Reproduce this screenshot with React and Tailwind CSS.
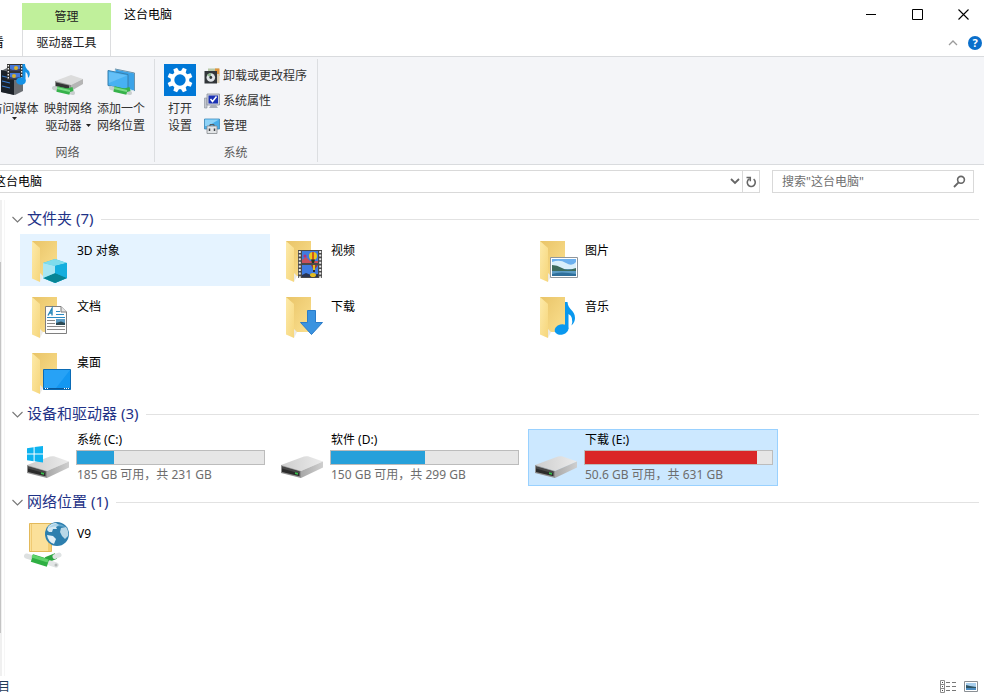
import React from 'react';

const FolderBase = () => (
  <>
    <defs>
      <linearGradient id="folderBack" x1="0" y1="0" x2="1" y2="1">
        <stop offset="0" stopColor="#e9c468" />
        <stop offset="1" stopColor="#fbe08f" />
      </linearGradient>
      <linearGradient id="folderFront" x1="0" y1="0" x2="1" y2="1">
        <stop offset="0" stopColor="#fdeaa9" />
        <stop offset="1" stopColor="#f6d67c" />
      </linearGradient>
    </defs>
    <path d="M8 4H33V39H8Z" fill="url(#folderBack)" />
    <path d="M8 4L16 11V45L8 41.5Z" fill="url(#folderFront)" />
    <path d="M16 36L19 39L16 45Z" fill="#eceae4" />
  </>
);

const Icon3D = () => (
  <>
    <path d="M19 26L31 22L43 26V41L31 46L19 41Z" fill="#35c3dc" />
    <path d="M19 26L31 22L43 26L31 29Z" fill="#7fdcec" />
    <path d="M19 26L31 29V46L19 41Z" fill="#62d2e6" />
    <path d="M31 29L43 26V41L31 46Z" fill="#11a6d8" />
    <path d="M19 41L31 36L43 41L31 46Z" fill="#078495" />
    <path d="M31 29V36L43 41V26Z" fill="#14aede" />
    <path d="M19 26L31 29V36L19 41Z" fill="#a9e6f2" />
  </>
);

const IconVideo = () => (
  <>
    <path d="M20 13H44V41H20Z" fill="#4a4a4a" />
    <path d="M24 14H40V26H24ZM24 28H40V40H24Z" fill="#3f7be0" />
    <path d="M21.8 14V41M42.2 14V41" stroke="#e8e8e8" strokeWidth="2" strokeDasharray="2 1.6" />
    <path d="M24 23L28 20L32 24L40 24V26H24Z" fill="#c9505c" />
    <path d="M24 38L28 36L33 38L40 37V40H24Z" fill="#2a3552" />
    <ellipse cx="35" cy="19" rx="4" ry="4" fill="#e9c71c" />
    <path d="M34.300 15H35.700V23H34.300Z" fill="#c92a1c" />
    <path d="M33 22.500H37L36 26H34Z" fill="#25371c" />
    <path d="M33 28H40L37 32H35Z" fill="#9b3a3c" />
    <path d="M35 28H37V33H35Z" fill="#e2c31f" />
    <path d="M35 33H37V35H35Z" fill="#2b2b2b" />
    <circle cx="27" cy="19" r="1.600" fill="#b7307b" />
    <ellipse cx="35" cy="38" rx="3" ry="2" fill="#e3bc20" />
  </>
);

const IconPicture = () => (
  <>
    <path d="M18.5 20.5H45.5V40.5H18.5Z" fill="#fff" stroke="#8f969c" />
    <path d="M20 22H44V39H20Z" fill="#6cb0ee" />
    <path d="M20 25Q28 22 34 26T44 25V32H20Z" fill="#d9effb" />
    <path d="M20 28Q25 28 30 31T44 31V34H20Z" fill="#3d6b5c" />
    <path d="M20 34H44V39H20Z" fill="#5c9cc4" />
    <path d="M20 37Q28 34 44 37V39H20Z" fill="#2f6f9b" />
  </>
);

const IconDocument = () => (
  <>
    <path d="M21.5 13.5H37L42.5 19V40.5H21.5Z" fill="#fdfdfd" stroke="#7f7f7f" />
    <path d="M37 13.5V19H42.5" fill="#e5e5e5" stroke="#7f7f7f" />
    <path d="M24 22.5L28 15.5V22.5M25.5 20H28" stroke="#2585b8" strokeWidth="1.4" fill="none" />
    <path d="M32 18.5H36M32 21.5H40M23 24.5H41" stroke="#2b8bc4" />
    <path d="M23 27.5H31M23 30.5H31M23 33.5H41M23 36.5H41" stroke="#8a8a8a" />
    <path d="M32 26H41V32H32Z" fill="#5c9cc4" />
    <path d="M32 30L37 28.5L41 30V32H32Z" fill="#2d4a55" />
  </>
);

const IconDownload = () => (
  <path d="M29.5 17.5H37.5V29.5H44.5L33.5 41.5L22.5 29.5H29.5Z" fill="#3a93e0" stroke="#2b7cc9" />
);

const IconMusic = () => (
  <>
    <ellipse cx="29.5" cy="36.5" rx="7" ry="5.2" fill="#0a98ee" transform="rotate(-14 29.5 36.5)" />
    <path d="M33 9H35.5C36 17 43 17 43 25Q43 29 39.5 32.5Q42 24 36.5 21V36H33Z" fill="#0a98ee" />
  </>
);

const IconDesktop = () => (
  <>
    <path d="M19.5 20.5H46.5V40.5H19.5Z" fill="#1397f2" stroke="#0b6bb5" />
    <path d="M20 21H46L32 39H20Z" fill="#35aaf8" opacity="0.6" />
    <path d="M20 39.5H46" stroke="#0a5a9c" />
    <path d="M21 39.5H24M40 39.5H45" stroke="#fff" strokeDasharray="1 1" />
  </>
);

const FolderIcon = ({ children }) => (
  <svg className="size-12 shrink-0" viewBox="0 0 48 48" aria-hidden="true">
    <FolderBase />
    {children}
  </svg>
);

const DriveIcon = ({ windows }) => (
  <svg className="size-12 shrink-0" viewBox="0 0 48 48" aria-hidden="true">
    <defs>
      <linearGradient id="driveTop" x1="0" y1="0" x2="1" y2="0">
        <stop offset="0" stopColor="#cdcdcd" />
        <stop offset="1" stopColor="#ebebeb" />
      </linearGradient>
      <linearGradient id="driveSide" x1="0" y1="0" x2="1" y2="0">
        <stop offset="0" stopColor="#a8a8a8" />
        <stop offset="1" stopColor="#cfcfcf" />
      </linearGradient>
    </defs>
    <path d="M3 32L26 23.5Q28 23 30 23.3L45 28.5L23 38Z" fill="url(#driveTop)" />
    <path d="M23 38L45 28.5V34.5L23 45Z" fill="url(#driveSide)" />
    <path d="M3 32L23 38V45L3 40Z" fill="#8f8f8f" />
    <path d="M4 33.5L21.5 38.5V43.3L4 39Z" fill="#2b2b2b" />
    <path d="M4 33.5L21.5 38.5V40.5L4 35.5Z" fill="#474747" />
    <path d="M17 39.2L20 40V41.8L17 41Z" fill="#35c24b" />
    {windows && (
      <path d="M3 15.2L9.6 14.2V20.6H3ZM10.6 14L19 13V20.6H10.6ZM3 21.6H9.6V28.2L3 27.2ZM10.6 21.6H19V29.4L10.6 28.3Z" fill="#0db3f0" />
    )}
  </svg>
);

const NetworkLocationIcon = () => (
  <svg className="size-12 shrink-0" viewBox="0 0 48 48" aria-hidden="true">
    <path d="M5.5 3.5H27.500V31.5H5.5Z" fill="#fbe09a" stroke="#e3b95a" />
    <path d="M7.5 4V31" stroke="#f0ca73" />
    <path d="M24 14L27 12V31H24Z" fill="#f2cd74" />
    <circle cx="33" cy="14" r="12" fill="#2d7fae" />
    <path d="M24 7Q27 3 32 3L35 5L32 7L33 9L29 9L28 12L25 12L23 10Z" fill="#d5e9f3" />
    <path d="M23 15L29 16L32 19L30 24Q24 22 23 15Z" fill="#e1eff6" />
    <path d="M37 8L42 7Q45 11 44 16L41 19L38 16L36 12Z" fill="#b9d8e8" />
    <path d="M24 8Q32 0 42 7Q32 5 24 8Z" fill="#8cc4e3" opacity="0.6" />
    <path d="M22 40L32 36" stroke="#2ba53f" strokeWidth="6" />
    <path d="M31 36.5L35 35" stroke="#dfe3e3" strokeWidth="5" strokeLinecap="round" />
    <path d="M2.5 36L9 38" stroke="#dde0e0" strokeWidth="5" strokeLinecap="round" />
    <path d="M26 43L32 45" stroke="#e2e5e5" strokeWidth="5.5" strokeLinecap="round" />
    <path d="M8 38L24 43" stroke="#2faf43" strokeWidth="8" strokeLinejoin="round" />
    <path d="M8 36L24 41" stroke="#5fd46c" strokeWidth="3" />
    <circle cx="32" cy="45" r="1.5" fill="#b4b8b8" />
  </svg>
);

const MediaIcon = () => (
  <svg className="size-8" viewBox="0 0 32 32" aria-hidden="true">
    <path d="M0 7L6 4H22V27L14 31L0 28Z" fill="#6b6f74" />
    <path d="M0 6L13 9V31L0 28Z" fill="#1c2229" />
    <path d="M1 12L9 14M1 17L9 19M1 22L9 24" stroke="#3a7dd0" strokeWidth="1.2" />
    <path d="M6 0H22V16H6Z" fill="#333" />
    <path d="M9 1H19V7H9ZM9 9H19V15H9Z" fill="#4677d6" />
    <path d="M7.3 1V16M20.7 1V16" stroke="#f1f1f1" strokeWidth="1.4" strokeDasharray="1.5 1.5" />
    <path d="M9 5L12 6L19 5V7H9ZM9 13L13 14L19 13V15H9Z" fill="#3a3f5c" />
    <circle cx="15" cy="4" r="2" fill="#d9b22b" />
    <circle cx="13" cy="12" r="2" fill="#d9b22b" />
    <ellipse cx="20" cy="17" rx="4.8" ry="3.8" fill="#1592e6" />
    <path d="M21.500 0H24Q24 4 28 7Q30 11 27 14Q27 9 24.500 8V17H21.500Z" fill="#1592e6" />
  </svg>
);

const GreenPipe = () => (
  <>
    <path d="M2 24L6 25M19 28.500L21 29" stroke="#c9cfcf" strokeWidth="4" strokeLinecap="round" />
    <path d="M14 27L21 25" stroke="#36b24a" strokeWidth="4" />
    <path d="M5 25L18 28" stroke="#36b24a" strokeWidth="5.500" />
    <path d="M5 24L18 27" stroke="#7bdc86" strokeWidth="2" />
  </>
);

const MapDriveIcon = () => (
  <svg className="size-8" viewBox="0 0 32 32" aria-hidden="true">
    <path d="M3 17L19 11L31 15L19 21Z" fill="#dcdcdc" />
    <path d="M19 21L31 15V20L19 27Z" fill="#b5b5b5" />
    <path d="M3 17L19 21V27L3 23Z" fill="#8f8f8f" />
    <path d="M4 18.5L17 21.5V25L4 22Z" fill="#333" />
    <GreenPipe />
  </svg>
);

const AddLocationIcon = () => (
  <svg className="size-8" viewBox="0 0 32 32" aria-hidden="true">
    <path d="M10 5L29.5 9V27L10 22Z" fill="#3ba3e8" stroke="#d6e6f0" />
    <path d="M10 5L29.5 9V27" fill="none" stroke="#4e7d9c" strokeWidth="0.8" />
    <path d="M3 6.5L23 10.5V26L3 21.5Z" fill="#47b1f3" stroke="#387fac" />
    <path d="M4 8L22 11.5L4 19Z" fill="#83cffb" opacity="0.5" />
    <g transform="translate(4 0)">
      <GreenPipe />
    </g>
  </svg>
);

const GearIcon = () => (
  <svg className="size-8 bg-[#0078d7]" viewBox="0 0 32 32" aria-hidden="true">
    <g fill="#fff">
      {[22.5, 67.5, 112.5, 157.5, 202.5, 247.5, 292.5, 337.5].map((angle) => (
        <path key={angle} d="M13.4 8L14 3.5H18L18.6 8Z" transform={`rotate(${angle} 16 16)`} />
      ))}
    </g>
    <circle cx="16" cy="16" r="7.5" fill="none" stroke="#fff" strokeWidth="3.6" />
  </svg>
);

const UninstallIcon = () => (
  <svg className="size-4" viewBox="0 0 16 16" aria-hidden="true">
    <path d="M4 0.5H15V13H4Z" fill="#b9c9a8" />
    <path d="M11 0.5H15.5V8H11Z" fill="#e0943c" />
    <path d="M12 6H15.5V15H12Z" fill="#d8cdb4" />
    <path d="M0.5 3H13V15.5H0.5Z" fill="#32363a" />
    <circle cx="6.8" cy="9.5" r="4.3" fill="#dfe3e6" />
    <path d="M6.8 9.5L3 7A4.3 4.3 0 0 1 7 5.2Z" fill="#8db68d" />
    <circle cx="6.8" cy="9.5" r="1.4" fill="#32363a" />
  </svg>
);

const PropertiesIcon = () => (
  <svg className="size-4" viewBox="0 0 16 16" aria-hidden="true">
    <path d="M0.5 5H3V15H0.5Z" fill="#c3c7cf" stroke="#888d98" strokeWidth="0.6" />
    <path d="M3 1H15.5V12H3Z" fill="#d0d3dc" stroke="#8c909c" strokeWidth="0.8" />
    <path d="M4.5 2.5H14V10.5H4.5Z" fill="#1b31b4" />
    <path d="M6.5 6L8.5 8.5L12.5 3.5" fill="none" stroke="#fff" strokeWidth="1.5" />
    <path d="M7 12H12L14 15H5Z" fill="#a9adb8" />
  </svg>
);

const ManageIcon = () => (
  <svg className="size-4" viewBox="0 0 16 16" aria-hidden="true">
    <path d="M0.5 1H15.5V11H0.5Z" fill="#48aeea" stroke="#3c86b5" strokeWidth="0.8" />
    <path d="M1 1.5H15L4 8H1Z" fill="#8ed3f8" />
    <path d="M3 8H13V15.5H3Z" fill="#e3e5e7" stroke="#85898d" strokeWidth="0.8" />
    <path d="M6 8V6.500H10V8" fill="none" stroke="#55595d" />
    <path d="M5.5 10.5V13M10.5 10.5V13" stroke="#3c4044" strokeWidth="1.5" />
  </svg>
);

const folders = [
  { name: '3D 对象', icon: <Icon3D />, hovered: true },
  { name: '视频', icon: <IconVideo /> },
  { name: '图片', icon: <IconPicture /> },
  { name: '文档', icon: <IconDocument /> },
  { name: '下载', icon: <IconDownload /> },
  { name: '音乐', icon: <IconMusic /> },
  { name: '桌面', icon: <IconDesktop /> },
];

const drives = [
  { name: '系统 (C:)', info: '185 GB 可用，共 231 GB', used: 20, windows: true },
  { name: '软件 (D:)', info: '150 GB 可用，共 299 GB', used: 50 },
  { name: '下载 (E:)', info: '50.6 GB 可用，共 631 GB', used: 92, selected: true },
];

const TitleBar = () => (
  <header className="flex h-14 items-start">
    <div className="-ml-2 flex w-[30px] flex-col justify-end self-stretch pb-1">
      <button className="w-3 leading-[18px]">看</button>
    </div>
    <div className="w-[89px] pt-[3px]">
      <div className="flex h-[27px] items-center justify-center bg-[#c0f09b] text-[#222]">管理</div>
      <button className="flex h-[26px] w-full items-center justify-center border-x border-[#dcdddf] text-[#222]">驱动器工具</button>
    </div>
    <h1 className="ml-[13px] flex-1 leading-[30px]">这台电脑</h1>
    <div>
      <div className="-mr-[2px] flex h-7">
        <button aria-label="最小化" className="flex w-[46px] items-center justify-center">
          <svg width="11" height="11" viewBox="0 0 11 11"><path d="M0 5.5H10" stroke="#000" /></svg>
        </button>
        <button aria-label="最大化" className="flex w-[46px] items-center justify-center">
          <svg width="11" height="11" viewBox="0 0 11 11"><path d="M0.5 0.5H10.5V10.5H0.5Z" fill="none" stroke="#000" /></svg>
        </button>
        <button aria-label="关闭" className="flex w-[46px] items-center justify-center">
          <svg width="11" height="11" viewBox="0 0 11 11"><path d="M0.5 0.5L10.5 10.5M10.5 0.5L0.5 10.5" stroke="#000" strokeWidth="1.1" /></svg>
        </button>
      </div>
      <div className="flex h-[29px] items-center justify-end gap-[10px] pr-[2px]">
        <button aria-label="折叠功能区">
          <svg width="10" height="6" viewBox="0 0 10 6"><path d="M1 5L5 1L9 5" fill="none" stroke="#9b9b9b" strokeWidth="1.3" /></svg>
        </button>
        <button aria-label="帮助" className="flex size-[14px] items-center justify-center rounded-full bg-[#0a6fcb] text-[11px] leading-[14px] font-bold text-white">?</button>
      </div>
    </div>
  </header>
);

const RibbonGroup = ({ label, className, children }) => (
  <section className={`my-[2px] flex flex-col justify-between border-r border-[#dcdee1] ${className}`}>
    <div className="flex pt-[5px]">{children}</div>
    <div className="text-center leading-[18px] text-[#5a5a5a]">{label}</div>
  </section>
);

const Arrow = () => (
  <svg className="inline-block" width="5" height="3" viewBox="0 0 5 3"><path d="M0 0H5L2.5 3Z" fill="#222" /></svg>
);

const Ribbon = () => (
  <div className="flex h-[109px] overflow-hidden border-y border-[#d9dbde] bg-[#f4f5f8] text-[#333]">
    <RibbonGroup label="网络" className="-ml-[18px] pr-[9px] pl-2">
      <div className="flex gap-[5px]">
        <button className="flex w-[49px] flex-col items-center">
          <span className="pl-1"><MediaIcon /></span>
          <span className="mt-1 leading-[17px]">访问媒体</span>
          <Arrow />
        </button>
        <button className="flex w-12 flex-col items-center">
          <MapDriveIcon />
          <span className="mt-1 leading-[17px]">映射网络</span>
          <span className="flex items-center gap-1 leading-[17px]">驱动器 <Arrow /></span>
        </button>
        <button className="flex w-12 flex-col items-center">
          <AddLocationIcon />
          <span className="mt-1 leading-[17px]">添加一个</span>
          <span className="leading-[17px]">网络位置</span>
        </button>
      </div>
    </RibbonGroup>
    <RibbonGroup label="系统" className="pr-[10px] pl-[9px]">
      <button className="flex w-8 flex-col items-center">
        <GearIcon />
        <span className="mt-1 leading-[17px]">打开</span>
        <span className="leading-[17px]">设置</span>
      </button>
      <div className="-mt-px ml-2 flex flex-col">
        <button className="flex h-[25px] items-center gap-[3px]"><UninstallIcon />卸载或更改程序</button>
        <button className="flex h-[25px] items-center gap-[3px]"><PropertiesIcon />系统属性</button>
        <button className="flex h-[25px] items-center gap-[3px]"><ManageIcon />管理</button>
      </div>
    </RibbonGroup>
  </div>
);

const AddressBar = () => (
  <div className="flex gap-3 overflow-hidden pt-[5px] pr-[10px]">
    <nav className="-ml-2 flex h-[23px] flex-1 border border-[#d9d9d9]">
      <button className="flex-1 pl-px text-left">这台电脑</button>
      <button aria-label="历史记录" className="flex w-[14px] items-center justify-center">
        <svg width="10" height="7" viewBox="0 0 10 7"><path d="M1 1L5 5L9 1" fill="none" stroke="#666" strokeWidth="1.8" /></svg>
      </button>
      <button aria-label="刷新" className="flex w-[17px] items-center justify-center border-l border-[#d9d9d9]">
        <svg width="12" height="12" viewBox="0 0 12 12">
          <path d="M4.6 2.8A4 4 0 1 0 8.6 3.2" fill="none" stroke="#666" strokeWidth="1.6" />
          <path d="M1.5 1.5H5.3V5.3" fill="none" stroke="#666" strokeWidth="1.5" />
        </svg>
      </button>
    </nav>
    <label className="flex h-[23px] w-[202px] items-center border border-[#d9d9d9] pr-[7px] pl-[9px]">
      <input type="text" aria-label="搜索" placeholder={'搜索"这台电脑"'} className="min-w-0 flex-1 leading-4 outline-none placeholder:text-[#707070]" />
      <svg width="13" height="13" viewBox="0 0 13 13">
        <circle cx="8" cy="4.8" r="3.4" fill="none" stroke="#666" strokeWidth="1.6" />
        <path d="M5.6 7.4L1 12" stroke="#666" strokeWidth="1.9" />
      </svg>
    </label>
  </div>
);

const Group = ({ title, children }) => (
  <section>
    <div className="mt-[5px] mb-1 flex h-[22px] items-center pr-[5px] pl-[7px]">
      <svg className="mr-1" width="11" height="7" viewBox="0 0 11 7"><path d="M0.5 1L5.5 6L10.5 1" fill="none" stroke="#777" strokeWidth="1.1" /></svg>
      <h2 className="pb-[2px] text-[15px] leading-5 text-[#1e3287]">{title}</h2>
      <div className="ml-2 h-px flex-1 bg-[#e2e2e2]" />
    </div>
    <div className="ml-[15px] grid grid-cols-[repeat(auto-fill,250px)] gap-1">{children}</div>
  </section>
);

const DriveItem = ({ drive }) => (
  <div className={`flex h-[57px] border px-[3px] pt-[2px] ${drive.selected ? 'border-[#99d1ff] bg-[#cce8ff]' : 'border-transparent'}`}>
    <div className="pt-px"><DriveIcon windows={drive.windows} /></div>
    <div className="ml-1 flex-1">
      <div className="pl-px leading-4">{drive.name}</div>
      <div className="mt-[2px] mr-px h-[15px] border border-[#bcbcbc] bg-[#e6e6e6]">
        <div className={`h-full ${drive.used > 90 ? 'bg-[#da2626]' : 'bg-[#26a0da]'}`} style={{ width: `${drive.used}%` }} />
      </div>
      <div className="mt-[2px] pl-px leading-4 whitespace-nowrap text-[#6d6d6d]">{drive.info}</div>
    </div>
  </div>
);

const StatusBar = () => (
  <footer className="flex h-[22px] items-center justify-between overflow-hidden pr-[6px]">
    <span className="-ml-[2px] text-[#1e3c5a]">目</span>
    <div className="flex items-center gap-[7px] pb-px">
      <button aria-label="详细信息">
        <svg width="17" height="13" viewBox="0 0 17 13">
          <path d="M0.5 0.5H4.5V12.5H0.5ZM0.5 4.5H4.5M0.5 8.5H4.5" fill="none" stroke="#8c8c8c" />
          <path d="M2 2.5H3M2 6.5H3M2 10.5H3" stroke="#444" />
          <path d="M6 2.5H10M12 2.5H16M6 6.5H10M12 6.5H16M6 10.5H10M12 10.5H16" stroke="#777" />
        </svg>
      </button>
      <button aria-label="大缩略图">
        <svg width="14" height="11" viewBox="0 0 14 11">
          <path d="M0.5 0.5H13.5V10.5H0.5Z" fill="#fff" stroke="#8a8f94" />
          <path d="M2 2H12V9H2Z" fill="#a8cfee" />
          <path d="M2 4L6 5L12 6V7H2Z" fill="#2e5464" />
          <path d="M2 7H12V9H2Z" fill="#4c8cc0" />
        </svg>
      </button>
    </div>
  </footer>
);

const App = () => (
  <div className="flex min-h-screen flex-col overflow-hidden bg-white font-['Noto_Sans','Noto_Sans_CJK_SC',sans-serif] text-[12px] leading-4 text-black">
    <TitleBar />
    <Ribbon />
    <AddressBar />
    <main className="mt-[7px] flex flex-1">
      <div className="flex w-[2px] flex-col bg-[#f0f0f0] pt-[62px] pb-[43px]">
        <div className="w-px flex-1 bg-[#c4c4c4]" />
      </div>
      <div className="ml-[2px] flex-1 border-l border-[#f6f6f6] pt-[3px]">
        <Group title="文件夹 (7)">
          {folders.map((folder) => (
            <div key={folder.name} className={`flex h-[52px] gap-[5px] px-1 pt-[3px] ${folder.hovered ? 'bg-[#e5f3ff]' : ''}`}>
              <FolderIcon>{folder.icon}</FolderIcon>
              <span className="pt-[6px]">{folder.name}</span>
            </div>
          ))}
        </Group>
        <Group title="设备和驱动器 (3)">
          {drives.map((drive) => (
            <DriveItem key={drive.name} drive={drive} />
          ))}
        </Group>
        <Group title="网络位置 (1)">
          <div className="flex h-[52px] gap-[5px] px-1 pt-[3px]">
            <NetworkLocationIcon />
            <span className="pt-[6px]">V9</span>
          </div>
        </Group>
      </div>
    </main>
    <StatusBar />
  </div>
);

export default App;
